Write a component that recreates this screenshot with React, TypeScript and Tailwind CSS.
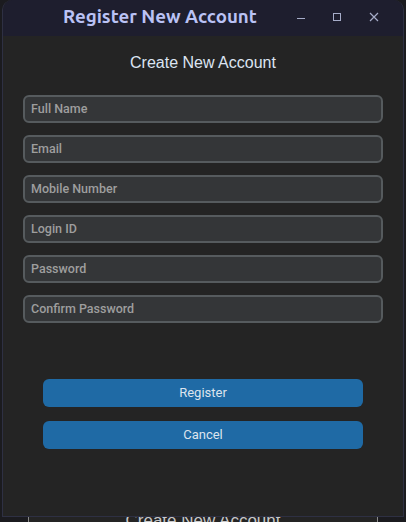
import React from "react";

const fields = ["Full Name", "Email", "Mobile Number", "Login ID", "Password", "Confirm Password"];

export default function App() {
  return (
    <div className="relative w-[406px] h-[522px] overflow-hidden bg-[#1b1b1f]" style={{ fontFamily: "Roboto, 'Liberation Sans', sans-serif" }}>
      {/* background window peeking below */}
      <div className="absolute left-[28px] top-[500px] w-[350px] h-[40px] border-x border-[#8a8a8a] bg-[#242424] flex justify-center">
        <span className="mt-[11px] text-[17px] leading-[20px] text-[#c8c8c8]" style={{ fontFamily: "'Liberation Sans', Arial, sans-serif" }}>Create New Account</span>
      </div>
      {/* dialog window */}
      <div className="absolute left-[2px] top-0 w-[402px] h-[517px] flex flex-col rounded-t-[10px] overflow-hidden border-x border-b border-[#2e3043] bg-[#242424]">
        <div className="h-[36px] shrink-0 bg-[#1e1e2e] flex items-center relative">
          <span className="absolute left-[60px] top-[5px] text-[18.7px] leading-[24px] font-bold text-[#bac2f5]" style={{ fontFamily: "Ubuntu, 'Noto Sans', sans-serif" }}>Register New Account</span>
          <div className="absolute left-[294px] top-[18px] w-[8px] h-[1px] bg-[#a6acc8]" />
          <div className="absolute left-[330px] top-[13px] w-[8px] h-[8px] border border-[#a6acc8]" />
          <svg className="absolute left-[366px] top-[12px]" width="10" height="10" viewBox="0 0 10 10">
            <path d="M1 1 L9 9 M9 1 L1 9" stroke="#a6acc8" strokeWidth="1.2" />
          </svg>
        </div>
        <div className="flex-1 flex flex-col items-center">
          <div className="mt-[17px] text-[16px] leading-[19px] text-[#dce4f2]" style={{ fontFamily: "'Liberation Sans', Arial, sans-serif" }}>Create New Account</div>
          <div className="mt-[23px] flex flex-col gap-[12px] w-[360px]">
            {fields.map((f) => (
              <div key={f} className="h-[28px] rounded-[6px] border-2 border-[#565b5e] bg-[#343638] flex items-center pl-[6px]">
                <span className="text-[12.5px] font-medium text-[#9e9e9e]">{f}</span>
              </div>
            ))}
          </div>
          <div className="mt-[56px] flex flex-col gap-[14px] w-[320px]">
            <div className="h-[28px] rounded-[6px] bg-[#1f6aa5] flex items-center justify-center text-[13px] text-[#dce4ee]">Register</div>
            <div className="h-[28px] rounded-[6px] bg-[#1f6aa5] flex items-center justify-center text-[13px] text-[#dce4ee]">Cancel</div>
          </div>
        </div>
      </div>
    </div>
  );
}
